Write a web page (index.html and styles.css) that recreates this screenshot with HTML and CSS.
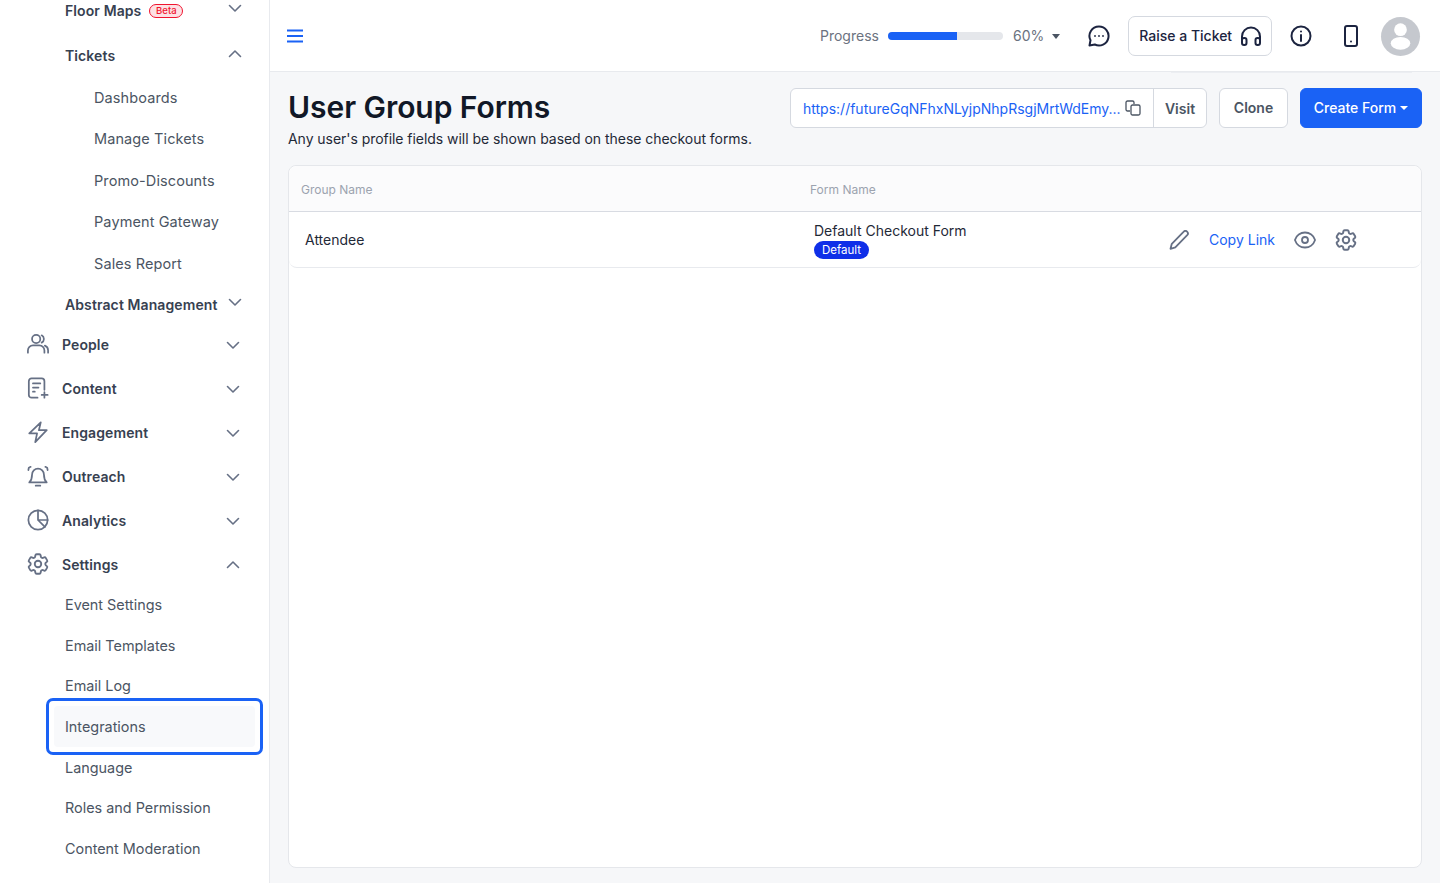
FILE: index.html
```html
<!DOCTYPE html>
<html lang="en">
  <head>
    <meta charset="UTF-8" />
    <title>User Group Forms</title>
    <link rel="stylesheet" href="styles.css">
  </head>
  <body>
    <aside class="sidebar">
      <div class="nav-row floor">
        <span class="nav-label">Floor Maps</span><span class="beta">Beta</span>
        <svg class="chev up-2" viewBox="0 0 16 16"><path d="M2.5 5.5 8 11l5.5-5.5"/></svg>
      </div>
      <div class="nav-row tickets">
        <span class="nav-label">Tickets</span>
        <svg class="chev up-2" viewBox="0 0 16 16"><path d="M2.5 10.5 8 5l5.5 5.5"/></svg>
      </div>
      <div class="deep-link">Dashboards</div>
      <div class="deep-link">Manage Tickets</div>
      <div class="deep-link">Promo-Discounts</div>
      <div class="deep-link">Payment Gateway</div>
      <div class="deep-link">Sales Report</div>
      <div class="nav-row abstract">
        <span class="nav-label">Abstract Management</span>
        <svg class="chev up-2" viewBox="0 0 16 16"><path d="M2.5 5.5 8 11l5.5-5.5"/></svg>
      </div>

      <div class="section">
        <svg class="section-icon" viewBox="0 0 24 24"><circle cx="10" cy="6.500" r="4.500"/><path d="M16 2.500a4.500 4.500 0 0 1 0 8M1 21.500V19a5.500 5.500 0 0 1 5.500-5.500h7A5.500 5.500 0 0 1 19 19v2.500M19.500 13.800A5.500 5.500 0 0 1 23 19v2.500"/></svg>
        <span class="section-label">People</span>
        <svg class="chev" viewBox="0 0 16 16"><path d="M2.5 5.5 8 11l5.5-5.5"/></svg>
      </div>
      <div class="section">
        <svg class="section-icon" viewBox="0 0 24 24"><path d="M11.500 22.500H5a3 3 0 0 1-3-3v-15a3 3 0 0 1 3-3h11a3 3 0 0 1 3 3V14"/><path d="M6.500 7h8M6.500 11.500h6M6.500 16h2M19 16.500v6M16 19.500h6.500"/></svg>
        <span class="section-label">Content</span>
        <svg class="chev" viewBox="0 0 16 16"><path d="M2.5 5.5 8 11l5.5-5.5"/></svg>
      </div>
      <div class="section">
        <svg class="section-icon" viewBox="0 0 24 24"><path d="M15 1.500 2.500 13.500H11L9 23l12.500-13h-8.500z"/></svg>
        <span class="section-label">Engagement</span>
        <svg class="chev" viewBox="0 0 16 16"><path d="M2.5 5.5 8 11l5.5-5.5"/></svg>
      </div>
      <div class="section">
        <svg class="section-icon" viewBox="0 0 24 24"><path d="M5.500 10.500a6.500 6.500 0 0 1 13 0c0 5 1 6.500 3 8.500h-19c2-2 3-3.500 3-8.500zM9.500 22.500h5M1.500 5.500 2 3l2-1M22.500 5.500 22 3l-2-1"/></svg>
        <span class="section-label">Outreach</span>
        <svg class="chev" viewBox="0 0 16 16"><path d="M2.5 5.5 8 11l5.5-5.5"/></svg>
      </div>
      <div class="section">
        <svg class="section-icon" viewBox="0 0 24 24"><circle cx="12" cy="12" r="10.500"/><path d="M12 1.500V12l7.500 7.500M12 12h10.500"/></svg>
        <span class="section-label">Analytics</span>
        <svg class="chev" viewBox="0 0 16 16"><path d="M2.5 5.5 8 11l5.5-5.5"/></svg>
      </div>
      <div class="section">
        <svg class="section-icon cog" viewBox="0 0 24 24"><path d="M9.594 3.94c.09-.542.56-.94 1.11-.94h2.593c.55 0 1.02.398 1.11.94l.213 1.281c.063.374.313.686.645.87.074.04.147.083.22.127.325.196.72.257 1.075.124l1.217-.456a1.125 1.125 0 0 1 1.37.49l1.296 2.247a1.125 1.125 0 0 1-.26 1.431l-1.003.827c-.293.241-.438.613-.43.992a7.723 7.723 0 0 1 0 .255c-.008.378.137.75.43.991l1.004.827c.424.35.534.955.26 1.43l-1.298 2.247a1.125 1.125 0 0 1-1.369.491l-1.217-.456c-.355-.133-.75-.072-1.076.124a6.47 6.47 0 0 1-.22.128c-.331.183-.581.495-.644.869l-.213 1.281c-.09.543-.56.94-1.11.94h-2.594c-.55 0-1.019-.398-1.11-.94l-.213-1.281c-.062-.374-.312-.686-.644-.87a6.52 6.52 0 0 1-.22-.127c-.325-.196-.72-.257-1.076-.124l-1.217.456a1.125 1.125 0 0 1-1.369-.49l-1.297-2.247a1.125 1.125 0 0 1 .26-1.431l1.004-.827c.292-.24.437-.613.43-.991a6.932 6.932 0 0 1 0-.255c.007-.38-.138-.751-.43-.992l-1.004-.827a1.125 1.125 0 0 1-.26-1.43l1.297-2.247a1.125 1.125 0 0 1 1.37-.491l1.216.456c.356.133.751.072 1.076-.124.072-.044.146-.086.22-.128.332-.183.582-.495.644-.869l.214-1.28Z"/><circle cx="12" cy="12" r="3"/></svg>
        <span class="section-label">Settings</span>
        <svg class="chev" viewBox="0 0 16 16"><path d="M2.5 10.500 8 5l5.500 5.500"/></svg>
      </div>

      <div class="settings-list">
        <div class="settings-link">Event Settings</div>
        <div class="settings-link">Email Templates</div>
        <div class="settings-link">Email Log</div>
        <div class="settings-link focused">Integrations</div>
        <div class="settings-link">Language</div>
        <div class="settings-link">Roles and Permission</div>
        <div class="settings-link">Content Moderation</div>
      </div>
    </aside>

    <div class="page">
      <header class="topbar">
        <svg class="menu-icon" viewBox="0 0 16 14"><path d="M0 1.500h16M0 7h16M0 12.500h16"/></svg>
        <div class="progress-label">Progress</div>
        <div class="progress-track"><div class="progress-fill" style="width: 60%"></div></div>
        <div class="progress-value">60%</div>
        <span class="caret grey"></span>
        <svg class="top-icon chat" viewBox="0 0 22 22"><path d="M11 1.500a9.500 9.500 0 1 1-4.200 18L1.500 20.500l1-5.200A9.500 9.500 0 0 1 11 1.500z"/><path class="dots" d="M7 11h.01M11 11h.01M15 11h.01"/></svg>
        <button class="ticket-btn"><span class="ticket-text">Raise a Ticket</span>
          <svg class="top-icon" viewBox="0 0 22 22"><path d="M2 17v-5.500a9 9 0 0 1 18 0V17"/><rect x="2" y="13" width="4.500" height="7" rx="2"/><rect x="15.500" y="13" width="4.500" height="7" rx="2"/></svg>
        </button>
        <svg class="top-icon info" viewBox="0 0 22 22"><circle cx="11" cy="11" r="9.500"/><path d="M11 10v6M11 6.500h.01"/></svg>
        <svg class="top-icon phone" viewBox="0 0 14 22"><rect x="1" y="1" width="12" height="20" rx="2"/><path d="M7 16.500h.01"/></svg>
        <div class="avatar">
          <svg viewBox="0 0 40 40"><circle cx="20" cy="13" r="6.500"/><ellipse cx="20" cy="27" rx="10" ry="6.500"/></svg>
        </div>
        <div class="hidden-edge"></div>
      </header>

      <main class="content">
        <div class="title-row">
          <div>
            <h1>User Group Forms</h1>
            <p class="subtitle">Any user's profile fields will be shown based on these checkout forms.</p>
          </div>
          <div class="title-actions">
            <div class="url-group">
              <div class="url-box">
                <span class="url-text">https://futureGqNFhxNLyjpNhpRsgjMrtWdEmy...</span>
                <svg class="copy-icon" viewBox="0 0 16 16"><path d="M5 11H2.500A1.500 1.500 0 0 1 1 9.500v-7A1.500 1.500 0 0 1 2.500 1h5A1.500 1.500 0 0 1 9 2.500V4"/><rect x="6" y="5" width="9" height="10" rx="1.500"/></svg>
              </div>
              <div class="visit">Visit</div>
            </div>
            <button class="clone-btn">Clone</button>
            <button class="create-btn">Create Form<span class="caret white"></span></button>
          </div>
        </div>

        <section class="card">
          <div class="table-head">
            <div class="th">Group Name</div>
            <div class="th">Form Name</div>
          </div>
          <div class="table-row">
            <div class="td">Attendee</div>
            <div class="td form-cell">
              <div class="form-name">Default Checkout Form</div>
              <span class="badge">Default</span>
            </div>
            <div class="row-actions">
              <svg class="action-icon pencil" viewBox="0 0 20 20"><path d="M14.500 1.800a2.300 2.300 0 0 1 3.700 3.400L6.300 17.300 1.500 18.800l1.300-5z"/></svg>
              <a class="copy-link">Copy Link</a>
              <svg class="action-icon eye" viewBox="0 0 24 24"><path d="M2.036 12.322a1.012 1.012 0 0 1 0-.639C3.423 7.51 7.36 4.5 12 4.5c4.638 0 8.573 3.007 9.963 7.178.07.207.07.431 0 .639C20.577 16.49 16.64 19.5 12 19.5c-4.638 0-8.573-3.007-9.963-7.178Z"/><circle cx="12" cy="12" r="3"/></svg>
              <svg class="action-icon gear" viewBox="0 0 24 24"><path d="M9.594 3.94c.09-.542.56-.94 1.11-.94h2.593c.55 0 1.02.398 1.11.94l.213 1.281c.063.374.313.686.645.87.074.04.147.083.22.127.325.196.72.257 1.075.124l1.217-.456a1.125 1.125 0 0 1 1.37.49l1.296 2.247a1.125 1.125 0 0 1-.26 1.431l-1.003.827c-.293.241-.438.613-.43.992a7.723 7.723 0 0 1 0 .255c-.008.378.137.75.43.991l1.004.827c.424.35.534.955.26 1.43l-1.298 2.247a1.125 1.125 0 0 1-1.369.491l-1.217-.456c-.355-.133-.75-.072-1.076.124a6.47 6.47 0 0 1-.22.128c-.331.183-.581.495-.644.869l-.213 1.281c-.09.543-.56.94-1.11.94h-2.594c-.55 0-1.019-.398-1.11-.94l-.213-1.281c-.062-.374-.312-.686-.644-.87a6.52 6.52 0 0 1-.22-.127c-.325-.196-.72-.257-1.076-.124l-1.217.456a1.125 1.125 0 0 1-1.369-.49l-1.297-2.247a1.125 1.125 0 0 1 .26-1.431l1.004-.827c.292-.24.437-.613.43-.991a6.932 6.932 0 0 1 0-.255c.007-.38-.138-.751-.43-.992l-1.004-.827a1.125 1.125 0 0 1-.26-1.43l1.297-2.247a1.125 1.125 0 0 1 1.37-.491l1.216.456c.356.133.751.072 1.076-.124.072-.044.146-.086.22-.128.332-.183.582-.495.644-.869l.214-1.28Z"/><circle cx="12" cy="12" r="3"/></svg>
            </div>
          </div>
        </section>
      </main>
    </div>
  </body>
</html>
```

FILE: styles.css
```css
* {
  box-sizing: border-box;
}
html,
body {
  height: 100%;
}
body {
  margin: 0;
  display: flex;
  overflow: hidden;
  font-family: Inter, "Noto Sans", sans-serif;
  font-size: 14px;
  color: #1f2937;
  background: #f6f7f9;
}
button {
  font-family: inherit;
}

/* sidebar */
.sidebar {
  width: 270px;
  flex: none;
  height: 883px;
  overflow: hidden;
  background: #fff;
  border-right: 1px solid #e8eaee;
}
.nav-row {
  display: flex;
  align-items: center;
  padding-left: 65px;
  color: #374151;
  font-weight: 600;
  font-size: 14px;
  letter-spacing: 0.1px;
}
.floor {
  height: 42px;
  margin-top: -11px;
}
.tickets {
  height: 42px;
  margin-top: 3px;
  margin-bottom: 0.5px;
}
.abstract {
  height: 38px;
  margin-top: 0.3px;
  padding-top: 2px;
}
.beta {
  margin-left: 8px;
  margin-top: 2px;
  height: 14px;
  padding: 0 5.5px;
  border: 1px solid #f0142f;
  border-radius: 8px;
  background: #fde1e4;
  color: #f0142f;
  font-size: 9.5px;
  font-weight: 500;
  line-height: 12px;
}
.chev {
  width: 16px;
  height: 16px;
  fill: none;
  stroke: #667085;
  stroke-width: 1.6;
  stroke-linecap: round;
  stroke-linejoin: round;
}
.nav-row .chev {
  margin-left: auto;
  margin-right: 26px;
}
.up-2 {
  margin-bottom: 4px;
}
.tickets .up-2 {
  margin-bottom: 2px;
}
.deep-link {
  height: 41.5px;
  padding-left: 94px;
  display: flex;
  align-items: center;
  color: #4b5563;
  font-size: 14.5px;
  letter-spacing: 0.1px;
}
.section {
  height: 44px;
  display: flex;
  align-items: center;
  padding-left: 27px;
  color: #374151;
  font-weight: 600;
  font-size: 14px;
  letter-spacing: 0.1px;
}
.section-icon {
  width: 22px;
  height: 22px;
  flex: none;
  fill: none;
  stroke: #667085;
  stroke-width: 1.9;
  stroke-linecap: round;
  stroke-linejoin: round;
}
.section-icon.cog {
  width: 26px;
  height: 26px;
  margin: 0 -2px;
  stroke-width: 1.7;
}
.section-label {
  margin-left: 13px;
}
.section .chev {
  margin-left: auto;
  margin-right: 28px;
  margin-top: 1px;
}
.settings-list {
  margin-top: -2.2px;
}
.settings-link {
  height: 40.67px;
  margin-left: 54px;
  width: 201px;
  padding-left: 11px;
  display: flex;
  align-items: center;
  color: #4b5563;
  font-size: 14.4px;
  border-radius: 4px;
}
.settings-link.focused {
  position: relative;
  background: #f8f9fb;
}
.settings-link.focused::after {
  content: "";
  position: absolute;
  inset: -8px;
  border: 3.5px solid #1a62f5;
  border-radius: 7px;
}

/* top bar */
.page {
  flex: 1;
  min-width: 0;
  display: flex;
  flex-direction: column;
}
.topbar {
  position: relative;
  height: 72px;
  flex: none;
  display: flex;
  align-items: center;
  padding-top: 1px;
  background: #fff;
  border-bottom: 1px solid #e8eaee;
}
.menu-icon {
  width: 16px;
  height: 14px;
  margin-left: 17px;
  fill: none;
  stroke: #1a62f5;
  stroke-width: 2;
}
.progress-label {
  margin-left: 517px;
  margin-top: -2px;
  color: #6b7280;
  font-size: 14px;
}
.progress-track {
  width: 115px;
  height: 8px;
  margin-left: 9px;
  border-radius: 4px;
  background: #e5e7eb;
  overflow: hidden;
}
.progress-fill {
  height: 100%;
  background: #1a62f5;
}
.progress-value {
  margin-left: 10px;
  margin-top: -2px;
  color: #6b7280;
  font-size: 14px;
}
.caret {
  width: 0;
  height: 0;
  border-left: 4.5px solid transparent;
  border-right: 4.5px solid transparent;
  border-top: 5px solid #4b5563;
}
.caret.grey {
  margin-left: 8px;
}
.top-icon {
  width: 22px;
  height: 22px;
  fill: none;
  stroke: #1c2440;
  stroke-width: 2;
  stroke-linecap: round;
  stroke-linejoin: round;
}
.chat {
  margin-left: 28px;
}
.chat .dots {
  stroke-width: 1.8;
}
.ticket-btn {
  width: 144px;
  height: 40px;
  margin-left: 18px;
  display: flex;
  align-items: center;
  justify-content: space-between;
  padding: 0 9px 0 10px;
  background: #fff;
  border: 1px solid #d5d9e0;
  border-radius: 7px;
  color: #1c2440;
  font-size: 14px;
  font-weight: 500;
}
.ticket-text {
  margin-top: -2px;
}
.info {
  margin-left: 18px;
}
.phone {
  width: 14px;
  margin-left: 32px;
}
.avatar {
  width: 39px;
  height: 39px;
  margin-left: 23px;
  border-radius: 50%;
  background: #c5c8ce;
}
.avatar svg {
  display: block;
  width: 100%;
  height: 100%;
  fill: #fff;
}
.hidden-edge {
  position: absolute;
  left: 901px;
  width: 241px;
  bottom: -2px;
  height: 1px;
  background: #eceef2;
}

/* content */
.content {
  flex: 1;
  padding: 16px 18px 15px;
  display: flex;
  flex-direction: column;
}
.title-row {
  display: flex;
  justify-content: space-between;
  align-items: flex-start;
}
h1 {
  margin: 0;
  color: #111827;
  font-size: 30px;
  font-weight: 600;
  line-height: 38px;
  letter-spacing: -0.05px;
}
.subtitle {
  margin: 3px 0 0;
  color: #1f2937;
  font-size: 14px;
  line-height: 20px;
  letter-spacing: -0.045px;
}
.title-actions {
  display: flex;
  gap: 12px;
}
.url-group {
  width: 417px;
  height: 40px;
  display: flex;
  background: #fff;
  border: 1px solid #d5d9e0;
  border-radius: 6px;
}
.url-box {
  flex: 1;
  display: flex;
  align-items: center;
  justify-content: space-between;
  padding: 0 12px;
  border-right: 1px solid #d5d9e0;
}
.url-text {
  color: #1a62f5;
  font-size: 14px;
}
.copy-icon {
  width: 16px;
  height: 16px;
  fill: none;
  stroke: #4b5563;
  stroke-width: 1.3;
}
.visit {
  width: 52px;
  display: flex;
  align-items: center;
  justify-content: center;
  color: #4b5563;
  font-weight: 600;
}
.clone-btn,
.create-btn {
  height: 40px;
  padding-bottom: 2px;
  border-radius: 6px;
  font-size: 14px;
}
.clone-btn {
  width: 69px;
  background: #fff;
  border: 1px solid #d5d9e0;
  color: #4b5563;
  font-weight: 600;
}
.create-btn {
  width: 122px;
  background: #1a62f5;
  border: 1px solid #1a62f5;
  color: #fff;
  font-weight: 500;
  display: flex;
  align-items: center;
  justify-content: center;
  gap: 4px;
}
.caret.white {
  border-top-color: #fff;
  border-left-width: 4px;
  border-right-width: 4px;
  border-top-width: 4px;
}

/* table card */
.card {
  flex: 1;
  margin-top: 16px;
  background: #fff;
  border: 1px solid #e5e7eb;
  border-radius: 8px;
}
.table-head {
  height: 46px;
  display: grid;
  grid-template-columns: 509px 1fr;
  align-items: center;
  padding-top: 1px;
  background: #fbfbfc;
  border-bottom: 1px solid #d8dbe2;
  border-radius: 8px 8px 0 0;
}
.th {
  padding-left: 12px;
  color: #9ca3af;
  font-size: 12px;
}
.table-row {
  height: 56px;
  display: grid;
  grid-template-columns: 509px 371px 1fr;
  align-items: center;
  border-bottom: 1px solid #e8eaee;
  border-radius: 0 0 8px 8px;
}
.td {
  padding-left: 16px;
  color: #1f2937;
}
.form-cell {
  padding-top: 1px;
}
.form-name {
  line-height: 17px;
  margin-bottom: 2px;
}
.badge {
  display: block;
  width: 55px;
  height: 18px;
  border-radius: 9px;
  background: #0f2fe8;
  color: #fff;
  font-size: 11.5px;
  line-height: 18px;
  text-align: center;
}
.row-actions {
  display: flex;
  align-items: center;
}
.action-icon {
  flex: none;
  fill: none;
  stroke: #667085;
  stroke-width: 1.8;
  stroke-linecap: round;
  stroke-linejoin: round;
}
.pencil {
  width: 20px;
  height: 20px;
}
.copy-link {
  margin-left: 20px;
  color: #1a62f5;
  font-size: 14px;
}
.eye {
  width: 24px;
  height: 24px;
  margin-left: 18px;
}
.gear {
  width: 26px;
  height: 26px;
  margin-left: 16px;
}
```
